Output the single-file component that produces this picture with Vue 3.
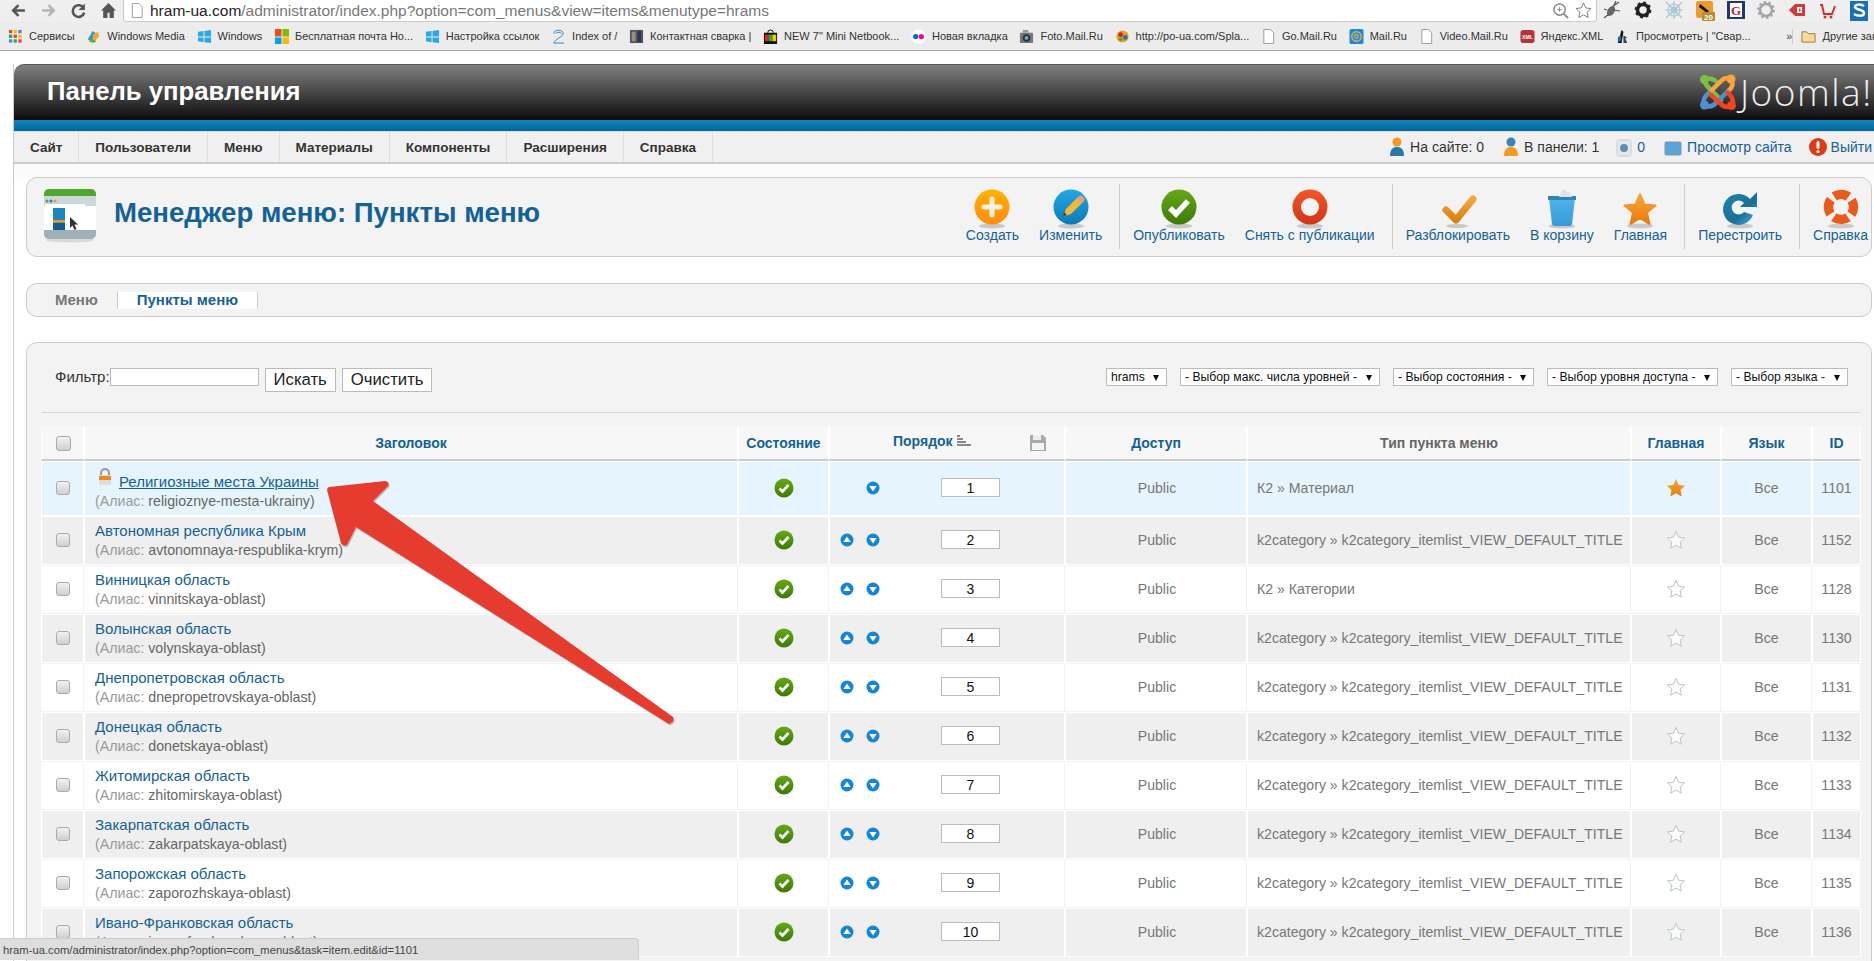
<template>
  <div class="screen">
    <svg class="defs" width="0" height="0" aria-hidden="true">
      <defs>
        <linearGradient id="g-orange" x1="0" y1="0" x2="0" y2="1"><stop offset="0" stop-color="#ffb400"/><stop offset="1" stop-color="#ff8a0c"/></linearGradient>
        <linearGradient id="g-blue" x1="0" y1="0" x2="0" y2="1"><stop offset="0" stop-color="#22a9e2"/><stop offset="1" stop-color="#0a7abb"/></linearGradient>
        <linearGradient id="g-green" x1="0" y1="0" x2="0" y2="1"><stop offset="0" stop-color="#66a916"/><stop offset="1" stop-color="#3c7a06"/></linearGradient>
        <linearGradient id="g-red" x1="0" y1="0" x2="0" y2="1"><stop offset="0" stop-color="#f2572a"/><stop offset="1" stop-color="#d23416"/></linearGradient>
        <linearGradient id="g-tick" x1="0" y1="0" x2="0" y2="1"><stop offset="0" stop-color="#f7a43a"/><stop offset="1" stop-color="#d9820f"/></linearGradient>
        <linearGradient id="g-bin" x1="0" y1="0" x2="0" y2="1"><stop offset="0" stop-color="#4fb4ea"/><stop offset="1" stop-color="#369ad6"/></linearGradient>
        <linearGradient id="g-star" x1="0" y1="0" x2="0" y2="1"><stop offset="0" stop-color="#f9a63a"/><stop offset="1" stop-color="#e87a0a"/></linearGradient>
        <linearGradient id="g-spin" x1="0" y1="0" x2="1" y2="1"><stop offset="0" stop-color="#1f86b0"/><stop offset="0.600" stop-color="#1a6f96"/><stop offset="1" stop-color="#4bb4e6"/></linearGradient>
      </defs>
    </svg>

    <!-- browser chrome -->
    <div class="chrome-top">
      <div class="nav-btns">
        <svg class="nav-ic" viewBox="0 0 16 16"><path d="M14 8H4M8 3L3 8l5 5" fill="none" stroke="#555" stroke-width="2.400"/></svg>
        <svg class="nav-ic" viewBox="0 0 16 16"><path d="M2 8h10M8 3l5 5-5 5" fill="none" stroke="#b5b5b5" stroke-width="2.400"/></svg>
        <svg class="nav-ic" viewBox="0 0 16 16"><path d="M13 6a5.500 5.500 0 1 0 .4 4" fill="none" stroke="#555" stroke-width="2.400"/><path d="M14 1.500v6h-6z" fill="#555"/></svg>
        <svg class="nav-ic" viewBox="0 0 16 16"><path d="M8 1L1 8h2v7h4v-5h2v5h4V8h2z" fill="#555"/></svg>
      </div>
      <div class="address">
        <svg class="page-ic" viewBox="0 0 12 16"><path d="M1 .5h7l3.500 3.500v11.500h-10.500z" fill="#fff" stroke="#999"/></svg>
        <span class="url"><b>hram-ua.com</b>/administrator/index.php?option=com_menus&amp;view=items&amp;menutype=hrams</span>
        <svg class="addr-ic" viewBox="0 0 18 18"><circle cx="8" cy="8" r="6" fill="#fff" stroke="#888" stroke-width="1.600"/><path d="M12.500 12.500L17 17" stroke="#888" stroke-width="2"/><path d="M5.500 8h5M8 5.500v5" stroke="#888"/></svg>
        <svg class="addr-ic" viewBox="0 0 18 18"><path d="M9 1l2.400 5.300 5.600.6-4.200 3.800 1.200 5.700L9 13.500l-5 2.900 1.200-5.700L1 6.900l5.600-.6z" fill="#fff" stroke="#777"/></svg>
      </div>
      <div class="extensions">
        <span v-for="e in extensions" :key="e" class="ext">
          <svg viewBox="0 0 18 18" v-html="extIcons[e]"></svg>
        </span>
      </div>
    </div>
    <div class="bookmarks">
      <span v-for="b in bookmarks" :key="b.label" class="bm">
        <svg class="bm-ic" viewBox="0 0 16 16" v-html="bmIcons[b.icon]"></svg>
        <span>{{ b.label }}</span>
      </span>
      <span class="bm-more">»</span>
      <span class="bm bm-other">
        <svg class="bm-ic" viewBox="0 0 16 16"><path d="M1 3h5l2 2h7v9H1z" fill="#f6d99a" stroke="#9c7a3c"/></svg>
        <span>Другие закладки</span>
      </span>
    </div>

    <!-- joomla admin -->
    <div class="page">
      <header class="top">
        <div class="top-title">Панель управления</div>
        <div class="logo">
          <svg class="logo-mark" viewBox="0 0 36 36">
            <g fill="none" stroke-width="4.500" stroke-linecap="round">
              <path d="M4 6Q6 12 11 16L21 26M4 6Q11 2 18 9" stroke="#7ac143"/>
              <path d="M31 5Q25 2 20 8L9 19M31 5Q35 12 28 17" stroke="#f9a541"/>
              <path d="M4 31Q2 24 9 19M4 31Q11 35 17 28L27 18" stroke="#5091cd"/>
              <path d="M32 32Q25 35 20 29L11 21M32 32Q35 25 28 19" stroke="#f44321"/>
            </g>
            <circle cx="4.500" cy="5.500" r="4.500" fill="#7ac143"/>
            <circle cx="31" cy="5" r="4.500" fill="#f9a541"/>
            <circle cx="4.500" cy="31" r="4.500" fill="#5091cd"/>
            <circle cx="31.500" cy="31.500" r="4.500" fill="#f44321"/>
          </svg>
          <span class="logo-text">Joomla!</span>
        </div>
      </header>
      <div class="blue-bar"></div>

      <nav class="menu">
        <a v-for="m in menu" :key="m" class="menu-item">{{ m }}</a>
        <div class="status-info">
          <svg class="si-ic" viewBox="0 0 18 22"><circle cx="9" cy="6" r="4.500" fill="#f59a23"/><path d="M2 20c0-7 3-9 7-9s7 2 7 9z" fill="#2a78a8"/></svg>
          <span>На сайте: 0</span>
          <svg class="si-ic si-gap si-second" viewBox="0 0 18 22"><circle cx="9" cy="6" r="4.500" fill="#3a85b8"/><path d="M2 20c0-7 3-9 7-9s7 2 7 9z" fill="#f59a23"/></svg>
          <span>В панели: 1</span>
          <svg class="si-ic si-gap" viewBox="0 0 18 22"><rect x="2" y="4" width="14" height="16" rx="2" fill="#e4e8ea" stroke="#ccc"/><circle cx="9" cy="12" r="4" fill="#5b8fb0"/></svg>
          <span class="si-link">0</span>
          <svg class="si-ic si-gap si-wide" viewBox="0 0 18 22"><rect x="1" y="6" width="16" height="13" rx="1" fill="#5aa4dc" stroke="#7d98ab"/></svg>
          <span class="si-link">Просмотр сайта</span>
          <svg class="si-ic si-gap si-exit" viewBox="0 0 18 22"><circle cx="9" cy="11" r="9" fill="#de3b12"/><rect x="7.500" y="5" width="3" height="8" rx="1.500" fill="#fff"/><circle cx="9" cy="15.500" r="1.500" fill="#fff"/></svg>
          <span class="si-link">Выйти</span>
        </div>
      </nav>

      <div class="content">
        <section class="toolbar-box">
          <svg class="head-ic" viewBox="0 0 54 54">
            <ellipse cx="27" cy="51" rx="24" ry="2.500" fill="#d9d9d9"/>
            <rect x="1" y="0" width="52" height="50" rx="5" fill="#cdd6db"/>
            <path d="M1 7V5a5 5 0 0 1 5-5h42a5 5 0 0 1 5 5v2z" fill="#4fa82d"/>
            <circle cx="4" cy="12" r="1.500" fill="#5aa832"/><circle cx="8" cy="12" r="1.500" fill="#1d7fb8"/><circle cx="12" cy="12" r="1.500" fill="#ef9a1f"/>
            <rect x="2" y="15" width="40" height="2" fill="#fff"/>
            <rect x="1" y="17" width="52" height="24" fill="#fff"/>
            <rect x="10" y="19" width="12" height="12" fill="#1b86c0"/>
            <rect x="10" y="31" width="12" height="2.500" fill="#f39c12"/>
            <rect x="10" y="33.500" width="12" height="7.500" fill="#145f8e"/>
            <path d="M27 28v11l2.500-2.500 2 4.500 2-1-2-4.500h3.500z" fill="#333"/>
            <path d="M1 41h52v4a5 5 0 0 1-5 5H6a5 5 0 0 1-5-5z" fill="#9fb0b8"/>
          </svg>
          <h1 class="page-title">Менеджер меню: Пункты меню</h1>
          <div class="tb-groups">
            <div v-for="(g, i) in toolbar" :key="i" class="tb-group">
              <div v-for="t in g" :key="t.label" class="tb-item">
                <svg class="tb-ic" viewBox="0 0 40 42" v-html="tbIcons[t.icon]"></svg>
                <span class="tb-label">{{ t.label }}</span>
              </div>
            </div>
          </div>
        </section>

        <section class="sub-box">
          <a class="sub-item">Меню</a>
          <a class="sub-item sub-active">Пункты меню</a>
        </section>

        <section class="main-box">
          <div class="filter-row">
            <label class="filter-label">Фильтр:</label>
            <input class="filter-input" type="text" />
            <button class="filter-btn">Искать</button>
            <button class="filter-btn">Очистить</button>
            <div class="selects">
              <label v-for="s in selects" :key="s" class="sel-wrap">
                <select class="sel"><option>{{ s }}</option></select>
              </label>
            </div>
          </div>
          <div class="rule"></div>

          <table class="items">
            <colgroup>
              <col class="w-check" /><col class="w-title" /><col class="w-state" /><col class="w-order" />
              <col class="w-access" /><col class="w-type" /><col class="w-home" /><col class="w-lang" /><col class="w-id" />
            </colgroup>
            <thead>
              <tr>
                <th><input class="chk chk-head" type="checkbox" /></th>
                <th>Заголовок</th>
                <th>Состояние</th>
                <th>
                  <div class="order-head">
                    <span>Порядок</span>
                    <svg class="sort-ic" viewBox="0 0 16 14"><path d="M1 2h3M1 5h6M1 8h9M1 11h14" stroke="#888" stroke-width="2"/></svg>
                    <svg class="save-ic" viewBox="0 0 18 18"><path d="M1 1h13l3 3v13H1z" fill="#a9a9a9"/><rect x="4" y="1" width="8" height="5" fill="#eee"/><rect x="3" y="9" width="12" height="7" fill="#f4f4f4"/></svg>
                  </div>
                </th>
                <th>Доступ</th>
                <th class="th-gray">Тип пункта меню</th>
                <th>Главная</th>
                <th>Язык</th>
                <th>ID</th>
              </tr>
            </thead>
            <tbody>
              <tr v-for="(r, i) in rows" :key="r.id" :class="['row', i === 0 ? 'row-active' : i % 2 ? 'row-gray' : 'row-white']">
                <td class="center"><input class="chk" type="checkbox" /></td>
                <td class="cell-title">
                  <div class="title-line">
                    <svg v-if="i === 0" class="lock-ic" viewBox="0 0 14 18"><path d="M3 8V5a4 4 0 0 1 8 0v3" fill="none" stroke="#999" stroke-width="2"/><rect x="1" y="7" width="12" height="10" fill="#ddd"/><rect x="1" y="8" width="12" height="4" fill="#ee8a1d"/></svg>
                    <a class="title-link" :class="{ 'is-open': i === 0 }">{{ r.title }}</a>
                  </div>
                  <div class="alias"><span class="alias-key">(Алиас:</span> {{ r.alias }})</div>
                </td>
                <td class="center">
                  <svg class="state-ic" viewBox="0 0 20 20"><circle cx="10" cy="10" r="9.500" fill="url(#g-green)"/><path d="M5.500 10.500l3 3 6-6.500" fill="none" stroke="#fff" stroke-width="2.600"/></svg>
                </td>
                <td>
                  <div class="order-cell">
                    <span class="arrow-slot">
                      <svg v-if="i > 0" viewBox="0 0 14 14"><circle cx="7" cy="7" r="6.500" fill="#1585d6"/><path d="M7 3.500l3.700 5.500H3.300z" fill="#fff"/></svg>
                    </span>
                    <span class="arrow-slot">
                      <svg viewBox="0 0 14 14"><circle cx="7" cy="7" r="6.500" fill="#1585d6"/><path d="M7 10.500L3.300 5h7.400z" fill="#fff"/></svg>
                    </span>
                    <input class="order-input" type="text" :value="i + 1" />
                  </div>
                </td>
                <td class="center muted cell-access">Public</td>
                <td class="muted cell-type">{{ r.type }}</td>
                <td class="center">
                  <svg class="home-ic" viewBox="0 0 20 20">
                    <path v-if="i === 0" d="M10 1l2.800 6 6.200.7-4.600 4.300 1.300 6.500L10 15.200 4.300 18.500 5.600 12 1 7.700 7.200 7z" fill="url(#g-star)"/>
                    <path v-else d="M10 1.500l2.600 5.700 6 .7-4.400 4.100 1.200 6.200-5.400-3.100-5.400 3.100 1.200-6.200-4.400-4.100 6-.7z" fill="#fafcfa" stroke="#bcc8bc"/>
                  </svg>
                </td>
                <td class="center muted">Все</td>
                <td class="center muted">{{ r.id }}</td>
              </tr>
            </tbody>
          </table>
        </section>
      </div>
    </div>

    <svg class="pointer" viewBox="0 0 1874 961">
      <path d="M329 487L385 481Q390 482 388 486L373 501L673 717Q675 722 669 724L356 527L347 545Q343 547 341 543L327 490Q327 488 329 487Z" fill="#b9b9b9" transform="translate(1 1.500)"/>
      <path d="M329 487L385 481Q390 482 388 486L373 501L673 717Q675 722 669 724L356 527L347 545Q343 547 341 543L327 490Q327 488 329 487Z" fill="#e63c2f"/>
    </svg>

    <div class="status-line">hram-ua.com/administrator/index.php?option=com_menus&amp;task=item.edit&amp;id=1101</div>
  </div>
</template>

<script setup>
const menu = ['Сайт', 'Пользователи', 'Меню', 'Материалы', 'Компоненты', 'Расширения', 'Справка']

const bookmarks = [
  { icon: 'apps', label: 'Сервисы' },
  { icon: 'wm', label: 'Windows Media' },
  { icon: 'win', label: 'Windows' },
  { icon: 'ms', label: 'Бесплатная почта Но...' },
  { icon: 'win', label: 'Настройка ссылок' },
  { icon: 'two', label: 'Index of /' },
  { icon: 'photo', label: 'Контактная сварка |' },
  { icon: 'bag', label: 'NEW 7" Mini Netbook...' },
  { icon: 'flickr', label: 'Новая вкладка' },
  { icon: 'camera', label: 'Foto.Mail.Ru' },
  { icon: 'po', label: 'http://po-ua.com/Spla...' },
  { icon: 'page', label: 'Go.Mail.Ru' },
  { icon: 'at', label: 'Mail.Ru' },
  { icon: 'page', label: 'Video.Mail.Ru' },
  { icon: 'xml', label: 'Яндекс.XML' },
  { icon: 'pen', label: 'Просмотреть | "Свар...' }
]

const bmIcons = {
  apps: '<g fill="#4285f4"><rect x="1" y="1" width="3.500" height="3.500" fill="#ea4335"/><rect x="6" y="1" width="3.500" height="3.500" fill="#fbbc05"/><rect x="11" y="1" width="3.500" height="3.500" fill="#4285f4"/><rect x="1" y="6" width="3.500" height="3.500" fill="#34a853"/><rect x="6" y="6" width="3.500" height="3.500" fill="#ea4335"/><rect x="11" y="6" width="3.500" height="3.500" fill="#fbbc05"/><rect x="1" y="11" width="3.500" height="3.500" fill="#4285f4"/><rect x="6" y="11" width="3.500" height="3.500" fill="#34a853"/><rect x="11" y="11" width="3.500" height="3.500" fill="#ea4335"/></g>',
  wm: '<path d="M2 11L7 2l3 2-4 10z" fill="#3f8fd8"/><path d="M7 6l6-3 1 5-5 5z" fill="#f5a623"/><path d="M3 13l5 2 3-2-4-3z" fill="#5bb33f"/>',
  win: '<path d="M1 3l6-1v6H1zM8 2l7-1v7H8zM1 9h6v5l-6-1zM8 9h7v6l-7-1z" fill="#2aa9e8"/>',
  ms: '<rect x="1" y="0" width="7" height="8" fill="#e8501f"/><rect x="9" y="0" width="7" height="8" fill="#7fba00"/><rect x="1" y="9" width="7" height="7" fill="#00a4ef"/><rect x="9" y="9" width="7" height="7" fill="#ffb900"/>',
  two: '<path d="M3 5c0-5 10-5 10 0 0 3-9 6-10 10h11M5 5c0-2 6-2 6 0" fill="none" stroke="#2a7fc9"/>',
  photo: '<rect x="1" y="1" width="14" height="14" fill="#556"/><rect x="3" y="3" width="4" height="10" fill="#9a8f7a"/><rect x="9" y="2" width="4" height="12" fill="#2f3552"/>',
  bag: '<path d="M5 4a3 3 0 0 1 6 0" fill="none" stroke="#000"/><rect x="1" y="4" width="14" height="12" fill="#111"/><rect x="2" y="6" width="4" height="7" fill="#d22"/><rect x="6" y="6" width="4" height="7" fill="#2a4"/><rect x="10" y="6" width="4" height="7" fill="#ec0"/>',
  flickr: '<circle cx="8" cy="8" r="7.500" fill="#fff"/><circle cx="5" cy="8" r="2.800" fill="#0063dc"/><circle cx="11" cy="8" r="2.800" fill="#ff0084"/>',
  camera: '<rect x="1" y="4" width="14" height="11" rx="1" fill="#777"/><rect x="4" y="1" width="6" height="3" fill="#999"/><circle cx="8" cy="9.500" r="4" fill="#234"/><circle cx="8" cy="9.500" r="2" fill="#7ab"/>',
  po: '<circle cx="8" cy="8" r="6.500" fill="#e9a11b"/><circle cx="6" cy="6" r="2.500" fill="#c23"/><circle cx="11" cy="9" r="2.500" fill="#27a"/><circle cx="6" cy="11" r="1.800" fill="#3a4"/>',
  page: '<path d="M3 .5h7l3.500 3.500v11.500H3z" fill="#fff" stroke="#999"/>',
  at: '<rect x="0.500" y="0" width="15" height="16" rx="2" fill="#168de2"/><circle cx="8" cy="8" r="5" fill="none" stroke="#ffa930" stroke-width="1.500"/><circle cx="8" cy="8" r="2" fill="none" stroke="#ffa930" stroke-width="1.300"/>',
  xml: '<rect x="0.500" y="1" width="15" height="14" rx="3" fill="#b7333a"/><text x="8" y="10.500" font-size="5.500" font-weight="700" fill="#fff" text-anchor="middle" font-family="Liberation Sans, sans-serif">XML</text>',
  pen: '<path d="M3 15L7 1l2 2-2 12z" fill="#111"/><path d="M9 7l4 2-2 1 2 5h-4z" fill="#345"/><path d="M3 9l3-2 1 5-4 2z" fill="#1c6ea8"/>'
}

const extensions = ['fly', 'gear', 'web', 'clock', 'flag', 'seo', 'tag', 'cart', 'skype']

const extIcons = {
  fly: '<ellipse cx="8" cy="10" rx="3.500" ry="5.500" fill="#666" transform="rotate(30 8 10)"/><path d="M9 6l7-5M10 9l7 1M6 13l-5 4M4 9l-3-1M11 4l2-4" stroke="#555" stroke-width="1.200"/>',
  gear: '<circle cx="9" cy="9" r="5.500" fill="none" stroke="#222" stroke-width="3.500"/><circle cx="9" cy="9" r="7.200" fill="none" stroke="#222" stroke-width="2.400" stroke-dasharray="2.800 2.850"/>',
  web: '<g fill="none" stroke="#a6c8d4" stroke-width="1.200"><circle cx="9" cy="9" r="3"/><circle cx="9" cy="9" r="6"/><path d="M1 1l16 16M17 1L1 17M9 0v18M0 9h18"/></g>',
  clock: '<rect x="0" y="0" width="17" height="17" rx="2" fill="#ee9a2d"/><path d="M4 3l9 7-2 2-8-6z" fill="#111"/><rect x="6" y="11" width="13" height="9" rx="1" fill="#bb8a34"/><text x="12.500" y="18.500" font-size="8" font-weight="700" fill="#fff" text-anchor="middle" font-family="Liberation Sans, sans-serif">20</text>',
  flag: '<rect x="0" y="0" width="18" height="18" fill="#20386f"/><rect x="3" y="2" width="12" height="14" fill="#fff"/><text x="9" y="14" font-size="13" font-weight="700" fill="#c8202c" text-anchor="middle" font-family="Liberation Serif, serif">G</text>',
  seo: '<circle cx="9" cy="9" r="6" fill="none" stroke="#a4a4a4" stroke-width="2.500"/><circle cx="9" cy="9" r="8" fill="none" stroke="#a4a4a4" stroke-width="1.800" stroke-dasharray="2.500 2.500"/>',
  tag: '<path d="M1 9l6-6h10v12H7z" fill="#d43a3a"/><rect x="9" y="6" width="5" height="6" fill="#fff"/><rect x="11" y="7.500" width="1.500" height="3" fill="#d43a3a"/>',
  cart: '<path d="M1 4h2l2 9h8l3-8" fill="none" stroke="#d2322d" stroke-width="2"/><rect x="6" y="3" width="6" height="6" fill="#eee"/><circle cx="6" cy="16" r="1.500" fill="#d2322d"/><circle cx="12" cy="16" r="1.500" fill="#d2322d"/>',
  skype: '<rect x="0" y="0" width="18" height="20" fill="#1a70b8"/><path d="M14 5c-3-2-9-2-9 1s9 2 9 6-7 3-10 1" fill="none" stroke="#fff" stroke-width="2.500"/>'
}

const toolbar = [
  [{ icon: 'create', label: 'Создать' }, { icon: 'edit', label: 'Изменить' }],
  [{ icon: 'publish', label: 'Опубликовать' }, { icon: 'unpublish', label: 'Снять с публикации' }],
  [{ icon: 'unlock', label: 'Разблокировать' }, { icon: 'trash', label: 'В корзину' }, { icon: 'star', label: 'Главная' }],
  [{ icon: 'rebuild', label: 'Перестроить' }],
  [{ icon: 'help', label: 'Справка' }]
]

const shadow = '<ellipse cx="20" cy="38" rx="13" ry="2.500" fill="#c9c9c9"/>'
const tbIcons = {
  create: shadow + '<circle cx="20" cy="19" r="17.500" fill="url(#g-orange)"/><path d="M20 11v16M12 19h16" stroke="#fff4e0" stroke-width="5" stroke-linecap="round"/>',
  edit: shadow + '<circle cx="20" cy="19" r="17.500" fill="url(#g-blue)"/><path d="M12 29l3-8 12-12 5 5-12 12z" fill="#f7b733"/><path d="M26 10l2-2q2-1 3 0l2 2q1 1 0 3l-2 2z" fill="#e89a9a"/><path d="M12 29l1-5 3 3z" fill="#444"/>',
  publish: shadow + '<circle cx="20" cy="19" r="17.500" fill="url(#g-green)"/><path d="M11 20l6 6 12-13" fill="none" stroke="#fff" stroke-width="5.500"/>',
  unpublish: shadow + '<circle cx="20" cy="19" r="17.500" fill="url(#g-red)"/><circle cx="20" cy="19" r="9" fill="#f5f3f3"/>',
  unlock: '<ellipse cx="19" cy="38" rx="11" ry="2" fill="#c9c9c9"/><path d="M8 22l10 10L35 11" fill="none" stroke="url(#g-tick)" stroke-width="7" stroke-linecap="round" stroke-linejoin="round"/>',
  trash: shadow + '<path d="M7 10h26l-3 26q-.3 2-2 2H12q-1.700 0-2-2z" fill="url(#g-bin)"/><path d="M6 8h28v4H6z" fill="#2f84b8"/><path d="M17 9l4-8 7 4 2 4z" fill="#dfe3e6"/>',
  star: shadow + '<path d="M20 6l4.500 10.500 11 1-8.500 7 2.500 11.500-9.500-6-9.500 6 2.500-11.500-8.500-7 11-1z" fill="url(#g-star)" stroke="url(#g-star)" stroke-width="2" stroke-linejoin="round"/>',
  rebuild: shadow + '<path d="M30 11A15.500 15.500 0 1 0 33 27L24 24A7 7 0 1 1 24 15L20 19H37V4z" fill="url(#g-spin)"/>',
  help: shadow + '<circle cx="20" cy="19" r="17" fill="#f4f1ee"/><g fill="none" stroke="#e85a1e" stroke-width="9.500"><circle cx="20" cy="19" r="12.500" stroke-dasharray="15 4.630" stroke-dashoffset="7.500"/></g><circle cx="20" cy="19" r="7.500" fill="#f3f3f3"/>'
}

const selects = [
  'hrams',
  '- Выбор макс. числа уровней -',
  '- Выбор состояния -',
  '- Выбор уровня доступа -',
  '- Выбор языка -'
]

const itemlist = 'k2category » k2category_itemlist_VIEW_DEFAULT_TITLE'
const rows = [
  { id: 1101, title: 'Религиозные места Украины', alias: 'religioznye-mesta-ukrainy', type: 'К2 » Материал' },
  { id: 1152, title: 'Автономная республика Крым', alias: 'avtonomnaya-respublika-krym', type: itemlist },
  { id: 1128, title: 'Винницкая область', alias: 'vinnitskaya-oblast', type: 'К2 » Категории' },
  { id: 1130, title: 'Волынская область', alias: 'volynskaya-oblast', type: itemlist },
  { id: 1131, title: 'Днепропетровская область', alias: 'dnepropetrovskaya-oblast', type: itemlist },
  { id: 1132, title: 'Донецкая область', alias: 'donetskaya-oblast', type: itemlist },
  { id: 1133, title: 'Житомирская область', alias: 'zhitomirskaya-oblast', type: itemlist },
  { id: 1134, title: 'Закарпатская область', alias: 'zakarpatskaya-oblast', type: itemlist },
  { id: 1135, title: 'Запорожская область', alias: 'zaporozhskaya-oblast', type: itemlist },
  { id: 1136, title: 'Ивано-Франковская область', alias: 'ivano-frankovskaya-oblast', type: itemlist }
]
</script>

<style>
html, body { margin: 0; background: #fff; }
</style>

<style scoped>
.screen {
  position: relative;
  width: 1874px;
  height: 961px;
  overflow: hidden;
  background: #fff;
  font-family: "Liberation Sans", Arial, sans-serif;
  color: #333;
}
.defs { position: absolute; }

/* browser chrome */
.chrome-top {
  display: flex;
  height: 22px;
  background: #efefef;
}
.nav-btns {
  display: flex;
  width: 123px;
  padding: 2px 0 0 10px;
  box-sizing: border-box;
  gap: 13px;
}
.nav-ic { width: 17px; height: 17px; }
.address {
  display: flex;
  align-items: center;
  flex: 1;
  height: 21px;
  background: #fff;
  border: 1px solid #ccc;
  border-top: none;
  border-radius: 0 0 3px 3px;
  padding: 0 4px 0 7px;
}
.page-ic { width: 12px; height: 15px; margin-right: 7px; }
.url { flex: 1; font-size: 15.500px; color: #777; white-space: nowrap; }
.url b { font-weight: normal; color: #222; }
.addr-ic { width: 17px; height: 17px; margin-left: 6px; }
.extensions { display: flex; width: 277px; }
.ext { width: 32px; display: flex; justify-content: center; padding-top: 1px; position: relative; z-index: 2; }
.ext svg { width: 18px; height: 18px; overflow: visible; }

.bookmarks {
  display: flex;
  align-items: center;
  height: 28px;
  padding: 0 0 0 8px;
  background: #ececec;
  border-bottom: 1px solid #a9a9a9;
  font-size: 11px;
  white-space: nowrap;
  overflow: hidden;
}
.bm { display: flex; align-items: center; gap: 6px; margin-right: 11.700px; color: #333; }
.bm-ic { width: 15px; height: 15px; flex: none; }
.bm-more { margin-left: 24px; width: 14px; color: #444; }
.bm-other { margin-left: 0; border-left: 1px solid #ccc; padding-left: 8px; margin-right: 0; }

/* admin page */
.page {
  margin: 13px 0 0 13px;
  border-left: 1px solid #ccc;
}
.top {
  display: flex;
  align-items: center;
  height: 54px;
  border-top: 1px solid #555;
  box-sizing: border-box;
  padding-left: 33px;
  border-radius: 10px 0 0 0;
  background: linear-gradient(#808080, #101010);
  overflow: hidden;
}
.top-title { font-size: 25.700px; font-weight: bold; color: #fff; }
.logo { display: flex; align-items: center; margin-left: auto; flex: none; width: 174px; height: 40px; }
.logo-mark { width: 36px; height: 36px; flex: none; }
.logo-text {
  font-family: "Open Sans", sans-serif;
  font-weight: 300;
  font-size: 37px;
  color: #eee;
  margin-left: 4px;
  letter-spacing: 1.500px;
}
.blue-bar {
  height: 11px;
  border-top: 2px solid #0b0b0b;
  background: linear-gradient(#1584b8, #05679c);
}
.menu {
  display: flex;
  align-items: stretch;
  height: 33px;
  box-sizing: border-box;
  background: #f0f0f0;
  border-top: 1px solid #ddd;
  border-bottom: 2px solid #ccc;
  overflow: hidden;
  white-space: nowrap;
}
.menu-item {
  display: flex;
  align-items: center;
  padding: 0 16px;
  border-right: 1px solid #ddd;
  font-size: 13.500px;
  font-weight: bold;
  color: #333;
}
.status-info {
  display: flex;
  align-items: center;
  margin-left: 675px;
  font-size: 14px;
  color: #333;
}
.si-ic { width: 18px; height: 22px; margin-right: 4px; flex: none; }
.si-gap { margin-left: 16px; }
.si-second { margin-left: 18px; }
.si-wide { margin-left: 19px; margin-right: 5px; }
.si-exit { margin-left: 17px; }
.si-link { color: #146295; }

.content { background: linear-gradient(#fbfbfb 13px, #fff 13px); padding: 13px 2px 0 12px; }

.toolbar-box {
  display: flex;
  align-items: flex-start;
  height: 80px;
  box-sizing: border-box;
  border: 1px solid #ccc;
  border-radius: 11px;
  background: #f3f3f3;
}
.head-ic { width: 54px; height: 54px; margin: 11px 0 0 16px; flex: none; overflow: visible; }
.page-title {
  margin: 19px 0 0 17px;
  font-size: 27.600px;
  font-weight: bold;
  color: #146295;
  white-space: nowrap;
}
.tb-groups { display: flex; margin-left: auto; margin-right: -14px; margin-top: 6px; }
.tb-group {
  display: flex;
  height: 65px;
  padding: 0 7px 0 3px;
  border-left: 1px solid #ccc;
}
.tb-group:first-child { border-left: none; }
.tb-item {
  display: flex;
  flex-direction: column;
  align-items: center;
  padding: 4px 10px 0;
}
.tb-ic { width: 40px; height: 42px; flex: none; }
.tb-label { font-size: 14px; color: #146295; white-space: nowrap; margin-top: -3px; }

.sub-box {
  display: flex;
  align-items: center;
  height: 34px;
  margin-top: 26px;
  box-sizing: border-box;
  padding-left: 28px;
  border: 1px solid #ccc;
  border-radius: 11px;
  background: #f3f3f3;
}
.sub-item {
  font-size: 15px;
  font-weight: bold;
  color: #777;
  height: 17px;
  line-height: 16px;
  padding-right: 19px;
}
.sub-active {
  color: #146295;
  background: #fff;
  padding: 0 19px;
  border-left: 1px solid #ccc;
  border-right: 1px solid #ccc;
}

.main-box {
  margin-top: 25px;
  height: 700px;
  box-sizing: border-box;
  padding: 25px 10px 0 14px;
  border: 1px solid #ccc;
  border-radius: 11px;
  background: #f3f3f3;
}
.filter-row { display: flex; align-items: flex-start; height: 44px; padding-left: 14px; }
.filter-label { font-size: 15px; line-height: 18px; color: #333; }
.filter-input {
  width: 149px;
  height: 18px;
  box-sizing: border-box;
  border: 1px solid #bbb;
  background: #fff;
  padding: 0;
  outline: none;
}
.filter-btn {
  height: 24px;
  margin-left: 6px;
  padding: 0 8px;
  border: 1px solid #bbb;
  background: #fff;
  font: 16.700px "Liberation Sans", Arial, sans-serif;
  color: #222;
}
.selects { display: flex; margin-left: auto; margin-right: 13px; gap: 13px; }
.sel-wrap { position: relative; display: block; }
.sel-wrap::after {
  content: "";
  position: absolute;
  right: 8px;
  top: 7px;
  border: 3.500px solid transparent;
  border-top: 6px solid #111;
  border-bottom: none;
  pointer-events: none;
}
.sel {
  appearance: none;
  display: block;
  height: 18px;
  box-sizing: border-box;
  padding: 0 21px 0 4px;
  border: 1px solid #bbb;
  border-radius: 0;
  background: #fff;
  font: 12.200px "Liberation Sans", Arial, sans-serif;
  color: #111;
}
.rule { height: 1px; margin: 0 1px; background: #d6d6d6; }

.items {
  width: 1820px;
  margin-top: 13px;
  table-layout: fixed;
  border-collapse: separate;
  border-spacing: 0;
  font-size: 14px;
}
.w-check { width: 43px; }
.w-title { width: 654px; }
.w-state { width: 91px; }
.w-order { width: 236px; }
.w-access { width: 182px; }
.w-type { width: 384px; }
.w-home { width: 90px; }
.w-lang { width: 91px; }
.w-id { width: 49px; }

.items th {
  height: 35px;
  box-sizing: border-box;
  padding: 0;
  background: #f7f7f7;
  border-left: 1px solid #fff;
  border-right: 1px solid #fff;
  border-bottom: 2px solid #ccc;
  font-size: 14px;
  color: #146295;
}
.items th.th-gray { color: #666; }
.order-head { display: flex; align-items: center; padding: 0 0 3px 63px; height: 29px; }
.sort-ic { width: 16px; height: 14px; margin-left: 3px; }
.save-ic { width: 18px; height: 18px; margin-left: 57px; margin-top: 3px; }

.row td {
  height: 49px;
  box-sizing: border-box;
  padding: 0 0 2px;
  border: 1px solid #fff;
  color: #777;
}
.row-active td { height: 55px; background: #e6f5fd; }
.row-gray td { background: #efefef; }
.row-white td { background: #fff; border-color: #f3f3f3 #f3f3f3 #f3f3f3 #fff; }
.center { text-align: center; }
.muted { font-size: 14.100px; }
.chk {
  appearance: none;
  display: inline-block;
  width: 14px;
  height: 14px;
  margin: -2px 0 0;
  vertical-align: middle;
  border: 1px solid #aaa;
  border-radius: 3px;
  background: linear-gradient(#f2f2f2, #cfcfcf);
}
.chk-head { margin: 0 0 0 1px; width: 15px; height: 15px; }
.row td.cell-title { padding: 1px 0 1px 10px; }
.row-active td.cell-title { padding-top: 6px; }
.title-line { display: flex; align-items: flex-start; line-height: 20px; }
.lock-ic { width: 14px; height: 18px; margin: -4px 7px 0 3px; flex: none; }
.title-link { font-size: 15px; color: #146295; }
.title-link.is-open { text-decoration: underline; }
.alias { font-size: 14.200px; line-height: 19px; color: #666; }
.alias-key { color: #999; }
.state-ic { width: 20px; height: 20px; vertical-align: middle; margin-top: 1px; }
.order-cell { display: flex; align-items: center; padding-left: 10px; }
.arrow-slot { width: 14px; height: 14px; margin-right: 12px; flex: none; }
.arrow-slot svg { display: block; width: 14px; height: 14px; }
.order-input {
  width: 59px;
  height: 19px;
  box-sizing: border-box;
  margin-left: 49px;
  border: 1px solid #bbb;
  background: #fff;
  padding: 0;
  text-align: center;
  font: 14px "Liberation Sans", Arial, sans-serif;
  color: #111;
  outline: none;
}
.row td.cell-access { padding-left: 2px; }
.row td.cell-type { padding-left: 9px; white-space: nowrap; }
.home-ic { width: 20px; height: 20px; vertical-align: middle; margin-top: 1px; }

.pointer {
  position: absolute;
  left: 0;
  top: 0;
  width: 1874px;
  height: 961px;
  pointer-events: none;
}
.status-line {
  position: absolute;
  left: 0;
  bottom: 1px;
  width: 639px;
  height: 22px;
  padding-left: 3px;
  line-height: 22px;
  background: #dedede;
  border-top: 1px solid #ccc;
  border-right: 1px solid #ccc;
  border-radius: 0 4px 0 0;
  box-sizing: border-box;
  font-size: 11.250px;
  color: #444;
}
</style>
